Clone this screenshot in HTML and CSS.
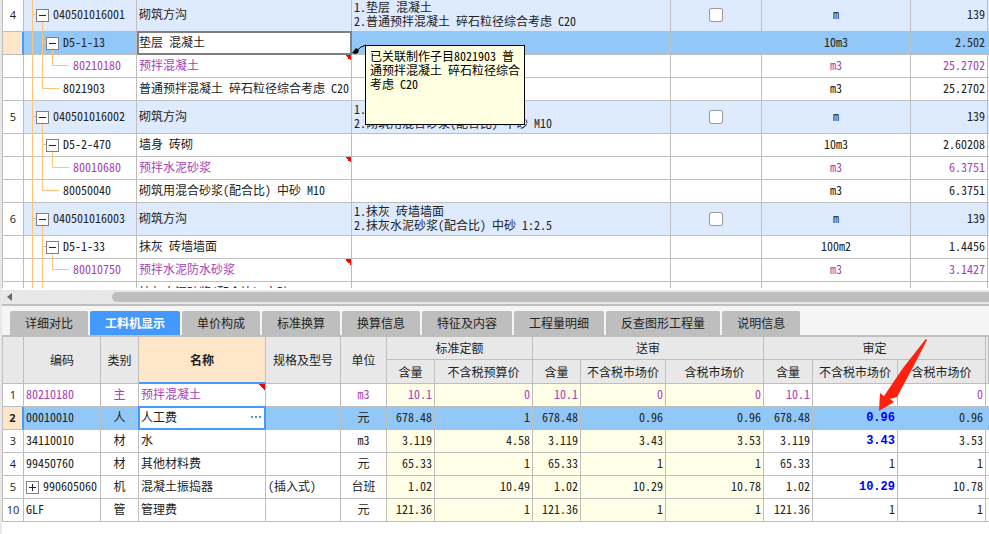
FILE: index.html
```
<!DOCTYPE html>
<html lang="zh-CN">
<head>
<meta charset="utf-8">
<title>工料机显示</title>
<link rel="stylesheet" href="styles.css">
</head>
<body>
<svg class="defs" width="0" height="0" aria-hidden="true">
  <symbol id="t1" overflow="visible"><path d="M8.5 0V33M9 15.5H12M18.5 21V33"/></symbol>
  <symbol id="t2" overflow="visible"><path d="M8.5 0V23M18.5 0V23M19 10.5H22M28.5 17V23"/></symbol>
  <symbol id="t3" overflow="visible"><path d="M8.5 0V23M18.5 0V23M28.5 0V10.5H45"/></symbol>
  <symbol id="t4" overflow="visible"><path d="M8.5 0V23M18.5 0V10.5H35"/></symbol>
</svg>
<main class="app">
  <section class="upper">
    <table class="grid bill">
      <colgroup><col class="w21"><col class="w113"><col class="w215"><col><col class="w91"><col class="w149"><col class="w77"><col class="w1"></colgroup>
      <tbody>
        <tr class="item"><th class="no">4</th><td class="tree l1"><svg class="guide"><use href="#t1"/></svg><button class="fold" aria-label="折叠"></button>040501016001</td><td>砌筑方沟</td><td>1.垫层 混凝土<br>2.普通预拌混凝土 碎石粒径综合考虑 C20</td><td class="c tick"><input type="checkbox" aria-label="选择"></td><td class="c">m</td><td class="r">139</td><td></td></tr>
        <tr class="sel"><th class="no cur"></th><td class="tree l2"><svg class="guide"><use href="#t2"/></svg><button class="fold" aria-label="折叠"></button>D5-1-13</td><td class="focus gray"><span>垫层 混凝土</span></td><td class="host"><svg class="leader" width="16" height="12" viewBox="0 0 16 12"><path d="M3 8 9 3 14 1" fill="none" stroke="#000"/><path d="M0 9 4 4 7 6 6 9 3 10Z"/></svg><div class="note">已关联制作子目8021903 普通预拌混凝土 碎石粒径综合考虑 C20</div></td><td></td><td class="c">10m3</td><td class="r">2.502</td><td></td></tr>
        <tr class="main"><th class="no"></th><td class="tree l3"><svg class="guide"><use href="#t3"/></svg>80210180</td><td class="mark">预拌混凝土</td><td></td><td></td><td class="c">m3</td><td class="r">25.2702</td><td></td></tr>
        <tr><th class="no"></th><td class="tree l4"><svg class="guide"><use href="#t4"/></svg>8021903</td><td>普通预拌混凝土 碎石粒径综合考虑 C20</td><td></td><td></td><td class="c">m3</td><td class="r">25.2702</td><td></td></tr>
        <tr class="item"><th class="no">5</th><td class="tree l1"><svg class="guide"><use href="#t1"/></svg><button class="fold" aria-label="折叠"></button>040501016002</td><td>砌筑方沟</td><td>1.墙身 砖砌<br>2.砌筑用混合砂浆(配合比) 中砂 M10</td><td class="c tick"><input type="checkbox" aria-label="选择"></td><td class="c">m</td><td class="r">139</td><td></td></tr>
        <tr><th class="no"></th><td class="tree l2"><svg class="guide"><use href="#t2"/></svg><button class="fold" aria-label="折叠"></button>D5-2-470</td><td>墙身 砖砌</td><td></td><td></td><td class="c">10m3</td><td class="r">2.60208</td><td></td></tr>
        <tr class="main"><th class="no"></th><td class="tree l3"><svg class="guide"><use href="#t3"/></svg>80010680</td><td class="mark">预拌水泥砂浆</td><td></td><td></td><td class="c">m3</td><td class="r">6.3751</td><td></td></tr>
        <tr><th class="no"></th><td class="tree l4"><svg class="guide"><use href="#t4"/></svg>80050040</td><td>砌筑用混合砂浆(配合比) 中砂 M10</td><td></td><td></td><td class="c">m3</td><td class="r">6.3751</td><td></td></tr>
        <tr class="item"><th class="no">6</th><td class="tree l1"><svg class="guide"><use href="#t1"/></svg><button class="fold" aria-label="折叠"></button>040501016003</td><td>砌筑方沟</td><td>1.抹灰 砖墙墙面<br>2.抹灰水泥砂浆(配合比) 中砂 1:2.5</td><td class="c tick"><input type="checkbox" aria-label="选择"></td><td class="c">m</td><td class="r">139</td><td></td></tr>
        <tr><th class="no"></th><td class="tree l2"><svg class="guide"><use href="#t2"/></svg><button class="fold" aria-label="折叠"></button>D5-1-33</td><td>抹灰 砖墙墙面</td><td></td><td></td><td class="c">100m2</td><td class="r">1.4456</td><td></td></tr>
        <tr class="main"><th class="no"></th><td class="tree l3"><svg class="guide"><use href="#t3"/></svg>80010750</td><td class="mark">预拌水泥防水砂浆</td><td></td><td></td><td class="c">m3</td><td class="r">3.1427</td><td></td></tr>
        <tr><th class="no"></th><td class="tree"><svg class="guide"><use href="#t4"/></svg></td><td>抹灰水泥砂浆(配合比) 中砂</td><td></td><td></td><td></td><td></td><td></td></tr>
      </tbody>
    </table>
  </section>
  <div class="scroll"><svg width="6" height="8" viewBox="0 0 6 8"><path d="M6 0V8L1 4Z" fill="#666"/></svg><div class="thumb"></div></div>
  <nav class="tabs">
    <button>详细对比</button><button class="on">工料机显示</button><button>单价构成</button><button>标准换算</button><button>换算信息</button><button>特征及内容</button><button>工程量明细</button><button>反查图形工程量</button><button>说明信息</button>
  </nav>
  <section class="lower">
    <table class="grid detail">
      <colgroup><col class="w21"><col class="w77"><col class="w38"><col class="w127"><col><col class="w46"><col class="w48"><col class="w98"><col class="w48"><col class="w85"><col class="w98"><col class="w49"><col class="w85"><col class="w88"><col class="w3"></colgroup>
      <thead>
        <tr><th rowspan="2"></th><th rowspan="2">编码</th><th rowspan="2">类别</th><th rowspan="2" class="pick">名称</th><th rowspan="2">规格及型号</th><th rowspan="2">单位</th><th colspan="2">标准定额</th><th colspan="3">送审</th><th colspan="3">审定</th><th rowspan="2"></th></tr>
        <tr class="sub"><th>含量</th><th>不含税预算价</th><th>含量</th><th>不含税市场价</th><th>含税市场价</th><th>含量</th><th class="host">不含税市场价<svg class="arrow" width="52" height="76" viewBox="0 0 52 76"><path d="M47 2 48 1 49 2 35 29 19 59 12 61 16 64 1 73 2 55 6 58 25 30Z" fill="#ff2010"/></svg></th><th>含税市场价</th></tr>
      </thead>
      <tbody>
        <tr class="main"><th class="no">1</th><td>80210180</td><td class="c">主</td><td class="mark">预拌混凝土</td><td></td><td class="c">m3</td><td class="r y">10.1</td><td class="r y">0</td><td class="r y">10.1</td><td class="r y">0</td><td class="r y">0</td><td class="r">10.1</td><td></td><td class="r">0</td><td></td></tr>
        <tr class="sel"><th class="no cur">2</th><td>00010010</td><td class="c">人</td><td class="focus blue"><span><input type="text" value="人工费" aria-label="名称"><button class="more" aria-label="更多"><i></i><i></i><i></i></button></span></td><td></td><td class="c">元</td><td class="r">678.48</td><td class="r">1</td><td class="r">678.48</td><td class="r">0.96</td><td class="r">0.96</td><td class="r">678.48</td><td class="r edit">0.96</td><td class="r">0.96</td><td></td></tr>
        <tr><th class="no">3</th><td>34110010</td><td class="c">材</td><td>水</td><td></td><td class="c">m3</td><td class="r y">3.119</td><td class="r y">4.58</td><td class="r y">3.119</td><td class="r y">3.43</td><td class="r y">3.53</td><td class="r">3.119</td><td class="r edit">3.43</td><td class="r">3.53</td><td></td></tr>
        <tr><th class="no">4</th><td>99450760</td><td class="c">材</td><td>其他材料费</td><td></td><td class="c">元</td><td class="r y">65.33</td><td class="r y">1</td><td class="r y">65.33</td><td class="r y">1</td><td class="r y">1</td><td class="r">65.33</td><td class="r">1</td><td class="r">1</td><td></td></tr>
        <tr><th class="no">5</th><td><button class="fold plus" aria-label="展开"></button>990605060</td><td class="c">机</td><td>混凝土振捣器</td><td>(插入式)</td><td class="c">台班</td><td class="r y">1.02</td><td class="r y">10.49</td><td class="r y">1.02</td><td class="r y">10.29</td><td class="r y">10.78</td><td class="r">1.02</td><td class="r edit">10.29</td><td class="r">10.78</td><td></td></tr>
        <tr><th class="no">10</th><td>GLF</td><td class="c">管</td><td>管理费</td><td></td><td class="c">元</td><td class="r y">121.36</td><td class="r y">1</td><td class="r y">121.36</td><td class="r y">1</td><td class="r y">1</td><td class="r">121.36</td><td class="r">1</td><td class="r">1</td><td></td></tr>
      </tbody>
    </table>
  </section>
</main>
</body>
</html>
```

FILE: styles.css
```
* { box-sizing: border-box; }

body {
  margin: 0;
  background: #fff;
  color: #222;
  font: 12px/14px "Noto Sans Mono CJK SC", "Noto Sans CJK SC", sans-serif;
}

button, input { margin: 0; padding: 0; font: inherit; color: inherit; }

.defs { position: absolute; }
.defs path { fill: none; stroke: #ffc478; }

.app {
  min-height: 100vh;
  border-left: 2px solid #e8e8e8;
  overflow: hidden;
}

/* grids */
.grid {
  width: 100%;
  table-layout: fixed;
  border-collapse: separate;
  border-spacing: 0;
  border-left: 1px solid #bebebe;
}
.grid td, .grid th {
  height: 23px;
  padding: 0 2px 2px;
  border: 0 solid #bebebe;
  border-width: 0 1px 1px 0;
  white-space: nowrap;
  vertical-align: middle;
  text-align: left;
  font-weight: 400;
}
.grid tbody tr > :last-child { border-right-width: 0; padding: 0; }
.grid .c { text-align: center; }
.grid .r { text-align: right; }
.grid .tick { padding: 0; }
.grid .no {
  padding: 0;
  text-align: center;
  font: 11px/14px "Open Sans", sans-serif;
}
.grid .cur {
  background: #ffe6c8;
  border-right: 2px solid #4499ff;
  font-weight: 700;
}
.item > td { background: #deeafe; }
.grid .item > * { height: 33px; }
.sel > td { background: #92c8f7; }
.main > td { color: #a63fb5; }
.y { background: #ffffe8; }
.grid .edit {
  padding-bottom: 0;
  color: #00f;
  font-family: "Liberation Mono", monospace;
  font-weight: 700;
}

.w1 { width: 1px; }
.w3 { width: 3px; }
.w21 { width: 21px; }
.w38 { width: 38px; }
.w46 { width: 46px; }
.w48 { width: 48px; }
.w49 { width: 49px; }
.w77 { width: 77px; }
.w85 { width: 85px; }
.w88 { width: 88px; }
.w91 { width: 91px; }
.w98 { width: 98px; }
.w113 { width: 113px; }
.w127 { width: 127px; }
.w149 { width: 149px; }
.w215 { width: 215px; }

/* bill of quantities */
.upper { height: 288px; overflow: hidden; }
.bill { margin-top: -1px; }

.grid .tree { position: relative; }
.grid .l1 { padding-left: 12px; }
.grid .l2 { padding-left: 22px; }
.grid .l3 { padding-left: 49px; }
.grid .l4 { padding-left: 39px; }
.guide {
  position: absolute;
  top: 0;
  left: 0;
  width: 60px;
  height: 100%;
  overflow: visible;
}

.fold {
  position: relative;
  width: 13px;
  height: 13px;
  margin-right: 4px;
  border: 1px solid #808080;
  background:
    linear-gradient(#222, #222) center / 7px 1px no-repeat,
    #fff;
  vertical-align: -2px;
}
.plus {
  background:
    linear-gradient(#222, #222) center / 7px 1px no-repeat,
    linear-gradient(#222, #222) center / 1px 7px no-repeat,
    #fff;
}

input[type="checkbox"] {
  appearance: none;
  display: block;
  width: 14px;
  height: 14px;
  margin: 0 auto;
  border: 1px solid #999;
  border-radius: 2px;
  background: #fff;
}

.mark {
  background: linear-gradient(45deg, transparent 50%, #f00 50%) right top / 6px 6px no-repeat;
}

.grid .focus { position: relative; }
.focus span {
  position: absolute;
  inset: -1px -1px -1px 0;
  display: flex;
  align-items: center;
  padding-bottom: 2px;
  border: 2px solid #808080;
  background: #fff;
}
.blue span { left: -1px; border-color: #4499ff; padding: 0 3px 2px 1px; }
.focus input {
  flex: 1;
  width: 0;
  border: 0;
  background: none;
  outline: none;
}
.more {
  display: flex;
  gap: 2px;
  border: 0;
  background: none;
}
.more i { width: 2px; height: 2px; background: #4a98d8; }

.grid .host { position: relative; }
.note {
  position: absolute;
  z-index: 2;
  top: 13px;
  left: 13px;
  width: 160px;
  height: 80px;
  padding: 3px 4px;
  border: 1px solid #000;
  background: #ffffe1;
  color: #000;
  white-space: normal;
}
.leader { position: absolute; z-index: 3; top: 12px; left: 0; }

.scroll {
  display: flex;
  align-items: center;
  gap: 100px;
  height: 16px;
  margin-top: 2px;
  padding-left: 4px;
  border-bottom: 2px solid #bebebe;
  background: #e8e8e8;
}
.thumb {
  flex: 1;
  height: 10px;
  border-radius: 5px 0 0 5px;
  background: #bebebe;
}

/* tabs */
.tabs {
  display: flex;
  gap: 2px;
  padding: 5px 8px 0;
  border-bottom: 2px solid #bebebe;
  background: #f5f5f5;
}
.tabs button {
  height: 24px;
  padding: 0 15px;
  border: 0;
  border-radius: 2px 2px 0 0;
  background: #bebebe;
  font-family: "Noto Sans CJK SC", sans-serif;
}
.tabs .on { background: #4499ff; color: #fff; font-weight: 700; }

/* resource detail */
.detail thead th {
  padding: 0;
  background: #e8e8e8;
  text-align: center;
}
.detail .sub th { height: 24px; }
.detail thead .pick {
  border-bottom: 2px solid #4499ff;
  background: #ffe6c8;
  font-weight: 700;
}
.arrow { position: absolute; z-index: 3; top: -22px; left: 65px; }
```
